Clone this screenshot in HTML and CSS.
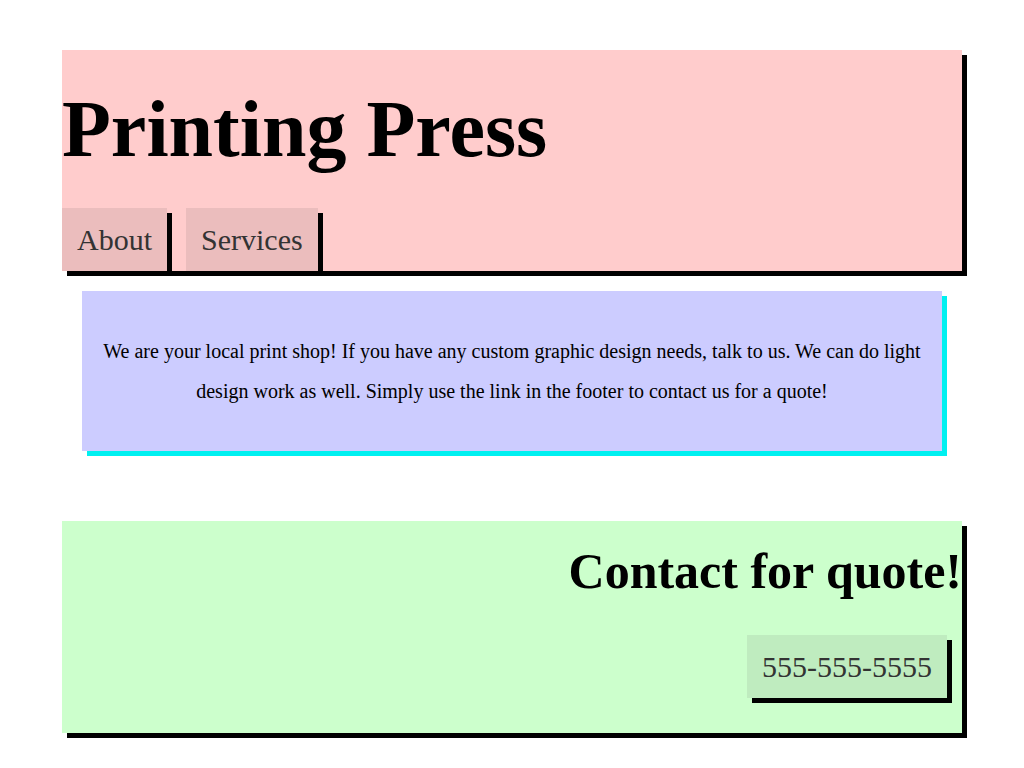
FILE: index.html
```html
<!DOCTYPE html>
<html lang="en">
<head>
<meta charset="utf-8">
<title>Printing Press</title>
<link rel="stylesheet" href="styles.css">
</head>
<body>
<div class="wrap">
  <header class="site-header">
    <h1 class="title">Printing Press</h1>
    <nav class="nav">
      <a class="btn" href="#">About</a>
      <a class="btn" href="#">Services</a>
    </nav>
  </header>
  <main class="intro">
    <p>We are your local print shop! If you have any custom graphic design needs, talk to us. We can do light design work as well. Simply use the link in the footer to contact us for a quote!</p>
  </main>
  <footer class="site-footer">
    <h2 class="contact">Contact for quote!</h2>
    <div class="phone-row">
      <a class="btn phone" href="#">555-555-5555</a>
    </div>
  </footer>
</div>
</body>
</html>
```
FILE: styles.css
```css
html, body {
  margin: 0;
  padding: 0;
  background: #ffffff;
}
body {
  font-family: "Liberation Serif", "Times New Roman", serif;
  color: #000;
}
.wrap {
  width: 900px;
  margin: 0 auto;
  padding: 50px 0 30px;
}
.site-header {
  background: #ffcccc;
  box-shadow: 5px 5px 0 #000;
  padding-top: 35px;
}
.title {
  margin: 0 0 35px;
  font-size: 80px;
  line-height: 88px;
  font-weight: bold;
}
.nav {
  display: flex;
  gap: 19px;
}
.btn {
  display: block;
  font-size: 30px;
  line-height: 33px;
  padding: 15px;
  color: #333333;
  text-decoration: none;
  background: #ebbdbd;
  box-shadow: 5px 5px 0 #000;
}
.intro {
  margin: 20px 20px 0;
  background: #ccccff;
  box-shadow: 5px 5px 0 #00f0f0;
  padding: 40px 20px;
  text-align: center;
}
.intro p {
  margin: 0;
  font-size: 20px;
  line-height: 40px;
}
.site-footer {
  margin-top: 70px;
  background: #ccffcc;
  box-shadow: 5px 5px 0 #000;
  padding: 22px 0 35px;
  text-align: right;
}
.contact {
  margin: 0 0 36px;
  font-size: 50px;
  line-height: 56px;
  font-weight: bold;
}
.phone-row {
  display: flex;
  justify-content: flex-end;
  padding-right: 15px;
}
.phone {
  background: #bfecbf;
}
```
